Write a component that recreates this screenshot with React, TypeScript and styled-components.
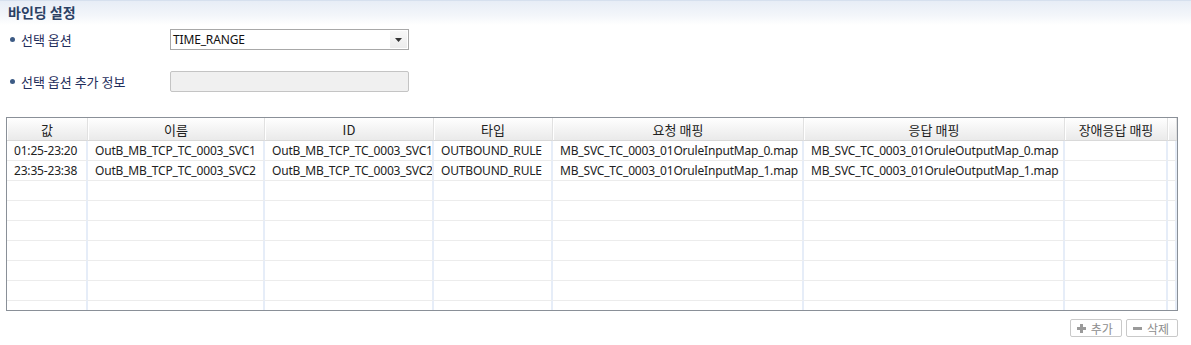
import React from 'react';
import styled, { createGlobalStyle } from 'styled-components';

const GlobalStyle = createGlobalStyle`
  html, body {
    margin: 0;
    padding: 0;
    background: #ffffff;
  }
  body {
    font-family: "Noto Sans", "Noto Sans CJK KR", sans-serif;
    font-size: 12px;
    color: #222;
  }
`;

type Row = {
  value: string;
  name: string;
  id: string;
  type: string;
  request: string;
  response: string;
  fault: string;
};

const columns = [
  { title: '값', width: 81 },
  { title: '이름', width: 177 },
  { title: 'ID', width: 169 },
  { title: '타입', width: 119 },
  { title: '요청 매핑', width: 251 },
  { title: '응답 매핑', width: 261 },
  { title: '장애응답 매핑', width: 103 },
  { title: '', width: 9 },
];

const rows: Row[] = [
  {
    value: '01:25-23:20',
    name: 'OutB_MB_TCP_TC_0003_SVC1',
    id: 'OutB_MB_TCP_TC_0003_SVC1',
    type: 'OUTBOUND_RULE',
    request: 'MB_SVC_TC_0003_01OruleInputMap_0.map',
    response: 'MB_SVC_TC_0003_01OruleOutputMap_0.map',
    fault: '',
  },
  {
    value: '23:35-23:38',
    name: 'OutB_MB_TCP_TC_0003_SVC2',
    id: 'OutB_MB_TCP_TC_0003_SVC2',
    type: 'OUTBOUND_RULE',
    request: 'MB_SVC_TC_0003_01OruleInputMap_1.map',
    response: 'MB_SVC_TC_0003_01OruleOutputMap_1.map',
    fault: '',
  },
];

const EMPTY_ROWS = 8;

export default function App() {
  const filled = rows.map((r) => [r.value, r.name, r.id, r.type, r.request, r.response, r.fault, '']);
  const blanks = Array.from({ length: EMPTY_ROWS }, () => columns.map(() => ''));
  const all = [...filled, ...blanks];

  return (
    <>
      <GlobalStyle />
      <StyledPage>
        <StyledTitleBar>바인딩 설정</StyledTitleBar>
        <StyledForm>
          <StyledField>
            <StyledLabel>선택 옵션</StyledLabel>
            <StyledSelect>
              <StyledSelectText>TIME_RANGE</StyledSelectText>
              <StyledSelectArrow>
                <svg width="7" height="4" viewBox="0 0 7 4">
                  <path d="M0 0 H7 L3.5 4 Z" fill="#333" />
                </svg>
              </StyledSelectArrow>
            </StyledSelect>
          </StyledField>
          <StyledField>
            <StyledLabel>선택 옵션 추가 정보</StyledLabel>
            <StyledInput />
          </StyledField>
        </StyledForm>

        <StyledTableBox>
          <StyledTable>
            <colgroup>
              {columns.map((c, i) => (
                <col key={i} style={{ width: c.width }} />
              ))}
            </colgroup>
            <thead>
              <tr>
                {columns.map((c, i) => (
                  <StyledTh key={i}>{c.title}</StyledTh>
                ))}
              </tr>
            </thead>
            <tbody>
              {all.map((cells, r) => (
                <tr key={r}>
                  {cells.map((text, c) => (
                    <StyledTd key={c}>{text}</StyledTd>
                  ))}
                </tr>
              ))}
            </tbody>
          </StyledTable>
        </StyledTableBox>

        <StyledActions>
          <StyledButton disabled>
            <svg width="9" height="9" viewBox="0 0 9 9">
              <path d="M3 0 H6 V3 H9 V6 H6 V9 H3 V6 H0 V3 H3 Z" fill="#9a9a9a" />
            </svg>
            추가
          </StyledButton>
          <StyledButton disabled>
            <svg width="9" height="9" viewBox="0 0 9 9">
              <rect x="0" y="3" width="9" height="3" fill="#9a9a9a" />
            </svg>
            삭제
          </StyledButton>
        </StyledActions>
      </StyledPage>
    </>
  );
}

const StyledPage = styled.div`
  width: 1191px;
  height: 345px;
  overflow: hidden;
`;

const StyledTitleBar = styled.div`
  height: 25px;
  box-sizing: border-box;
  border-top: 1px solid #d6e0ee;
  background: linear-gradient(to bottom, #e7edf6 0%, #f3f6fa 60%, #ffffff 100%);
  padding: 2px 0 0 8px;
  font-family: "Noto Sans CJK KR", sans-serif;
  font-size: 14px;
  font-weight: 700;
  color: #2b4164;
  line-height: 18px;
`;

const StyledForm = styled.div`
  display: flex;
  flex-direction: column;
  padding-top: 4px;
  height: 88px;
`;

const StyledField = styled.div`
  display: flex;
  align-items: flex-start;
  height: 42px;
  padding-left: 10px;
`;

const StyledLabel = styled.div`
  width: 160px;
  display: flex;
  align-items: center;
  height: 21px;
  font-family: "Noto Sans CJK KR", sans-serif;
  font-size: 13px;
  color: #1f2e5c;
  &::before {
    content: '';
    width: 5px;
    height: 5px;
    border-radius: 50%;
    background: #3d5b85;
    margin-right: 6px;
  }
`;

const StyledSelect = styled.div`
  width: 239px;
  height: 21px;
  box-sizing: border-box;
  border: 1px solid #a8a8a8;
  background: #ffffff;
  display: flex;
  align-items: center;
  justify-content: space-between;
`;

const StyledSelectText = styled.span`
  padding-left: 2px;
  font-size: 12px;
  letter-spacing: -0.15px;
  color: #111;
`;

const StyledSelectArrow = styled.span`
  width: 17px;
  height: 17px;
  margin-right: 1px;
  background: linear-gradient(to bottom, #f8f8f8, #ececec);
  display: flex;
  align-items: center;
  justify-content: center;
`;

const StyledInput = styled.div`
  width: 239px;
  height: 21px;
  box-sizing: border-box;
  border: 1px solid #c4c4c4;
  border-radius: 2px;
  background: #f0f0f0;
`;

const StyledTableBox = styled.div`
  margin-left: 6px;
  width: 1172px;
  height: 194px;
  box-sizing: border-box;
  border: 1px solid #8a9098;
  overflow: hidden;
`;

const StyledTable = styled.table`
  table-layout: fixed;
  border-collapse: separate;
  border-spacing: 0;
  width: 1170px;
`;

const StyledTh = styled.th`
  height: 23px;
  box-sizing: border-box;
  padding: 0;
  font-family: "Noto Sans CJK KR", "Noto Sans", sans-serif;
  font-weight: 400;
  font-size: 13px;
  color: #222;
  text-align: center;
  background: linear-gradient(to bottom, #ffffff 0%, #f4f4f4 50%, #eaeaea 100%);
  border-bottom: 1px solid #d9d9d9;
  border-right: 1px solid #e1e1e1;
  box-shadow: inset 1px 0 0 #ffffff;
  white-space: nowrap;
  overflow: hidden;
`;

const StyledTd = styled.td`
  height: 20px;
  box-sizing: border-box;
  padding: 0 0 0 7px;
  font-size: 12px;
  letter-spacing: -0.18px;
  color: #222;
  border-bottom: 1px solid #ececec;
  border-right: 2px solid #e6edf8;
  white-space: nowrap;
  overflow: hidden;
`;

const StyledActions = styled.div`
  display: flex;
  justify-content: flex-end;
  gap: 4px;
  width: 1178px;
  margin-top: 8px;
`;

const StyledButton = styled.button`
  display: flex;
  align-items: center;
  gap: 5px;
  height: 18px;
  padding: 0 8px 0 6px;
  box-sizing: border-box;
  border: 1px solid #c9c9c9;
  border-radius: 2px;
  background: #ffffff;
  font-family: "Noto Sans CJK KR", sans-serif;
  font-size: 12px;
  color: #8d8d8d;
`;
